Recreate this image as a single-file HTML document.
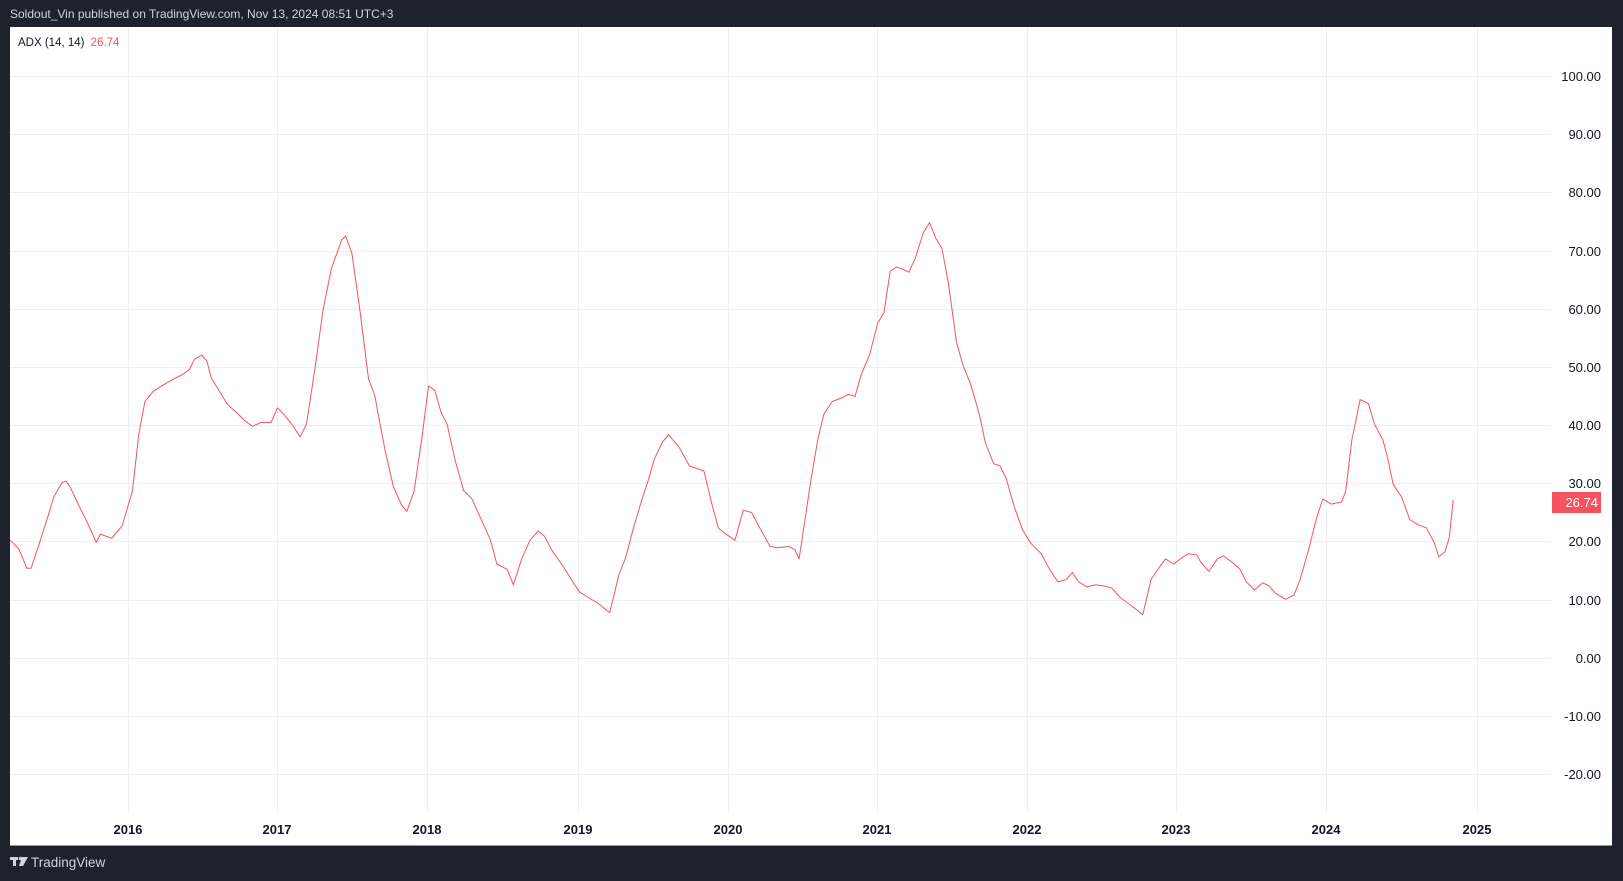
<!DOCTYPE html>
<html><head><style>
body{margin:0;width:1623px;height:881px;background:#1e222d;position:relative;overflow:hidden;font-family:"Liberation Sans",sans-serif}
.top{position:absolute;left:10px;top:7px;color:#d1d4dc;font-size:12px}
.chart{position:absolute;left:10px;top:27px;width:1602px;height:818px;background:#fff;border-bottom:1px solid #9598a1}
</style></head><body>
<div class="top">Soldout_Vin published on TradingView.com, Nov 13, 2024 08:51 UTC+3</div>
<div class="chart"></div>
<svg width="1623" height="881" style="position:absolute;left:0;top:0" font-family="Liberation Sans, sans-serif">
<g stroke="#eeeff2" stroke-width="1">
<line x1="10" x2="1551" y1="76.5" y2="76.5"/><line x1="10" x2="1551" y1="134.5" y2="134.5"/><line x1="10" x2="1551" y1="192.5" y2="192.5"/><line x1="10" x2="1551" y1="251.5" y2="251.5"/><line x1="10" x2="1551" y1="309.5" y2="309.5"/><line x1="10" x2="1551" y1="367.5" y2="367.5"/><line x1="10" x2="1551" y1="425.5" y2="425.5"/><line x1="10" x2="1551" y1="483.5" y2="483.5"/><line x1="10" x2="1551" y1="541.5" y2="541.5"/><line x1="10" x2="1551" y1="600.5" y2="600.5"/><line x1="10" x2="1551" y1="658.5" y2="658.5"/><line x1="10" x2="1551" y1="716.5" y2="716.5"/><line x1="10" x2="1551" y1="774.5" y2="774.5"/>
<line x1="128.5" x2="128.5" y1="27" y2="814"/><line x1="277.5" x2="277.5" y1="27" y2="814"/><line x1="427.5" x2="427.5" y1="27" y2="814"/><line x1="578.5" x2="578.5" y1="27" y2="814"/><line x1="728.5" x2="728.5" y1="27" y2="814"/><line x1="877.5" x2="877.5" y1="27" y2="814"/><line x1="1027.5" x2="1027.5" y1="27" y2="814"/><line x1="1176.5" x2="1176.5" y1="27" y2="814"/><line x1="1326.5" x2="1326.5" y1="27" y2="814"/><line x1="1477.5" x2="1477.5" y1="27" y2="814"/>
</g>
<g font-size="13" fill="#131722" text-anchor="end">
<text x="1601" y="81">100.00</text><text x="1601" y="139">90.00</text><text x="1601" y="197">80.00</text><text x="1601" y="256">70.00</text><text x="1601" y="314">60.00</text><text x="1601" y="372">50.00</text><text x="1601" y="430">40.00</text><text x="1601" y="488">30.00</text><text x="1601" y="546">20.00</text><text x="1601" y="605">10.00</text><text x="1601" y="663">0.00</text><text x="1601" y="721">-10.00</text><text x="1601" y="779">-20.00</text>
</g>
<rect x="1552" y="492" width="49" height="21" fill="#f7525f"/>
<text x="1598" y="507" font-size="13" fill="#fff" text-anchor="end">26.74</text>
<g font-size="13" font-weight="bold" fill="#131722" text-anchor="middle">
<text x="128" y="834">2016</text><text x="277" y="834">2017</text><text x="427" y="834">2018</text><text x="578" y="834">2019</text><text x="728" y="834">2020</text><text x="877" y="834">2021</text><text x="1027" y="834">2022</text><text x="1176" y="834">2023</text><text x="1326" y="834">2024</text><text x="1477" y="834">2025</text>
</g>
<text x="18" y="46" font-size="11.5" fill="#131722">ADX (14, 14) <tspan fill="#f7525f" dx="3">26.74</tspan></text>
<g transform="scale(1.0351)">
<polyline fill="none" stroke="#f7525f" stroke-width="1" vector-effect="non-scaling-stroke" stroke-linejoin="round" points="10,522 18,530 26,549 30,549 38,525 46,500 52,480 60,466 64,465 68,471 76,488 84,504 93,524 97,516 108,520 118,508 128,474 134,420 140,388 148,378 156,373 166,367 176,362 183,357 188,347 195,343 200,349 204,365 212,378 220,391 228,398 236,406 244,412 252,408 262,408 268,394 274,400 282,410 290,422 296,410 304,358 312,300 320,260 330,232 334,228 340,245 348,302 356,366 362,382 372,435 380,470 388,488 393,494 400,475 408,420 414,373 420,377 426,398 432,410 440,446 448,474 456,482 464,500 474,522 480,545 490,550 496,565 504,540 512,522 520,513 526,518 534,533 544,547 552,560 560,572 568,577 578,583 589,592 598,555 604,540 612,510 620,483 626,465 632,444 640,427 646,420 650,425 656,432 666,450 680,455 688,488 694,510 700,515 710,522 718,493 726,495 734,510 744,528 752,529 762,528 768,531 772,540 778,500 784,460 790,425 796,400 804,388 814,384 820,381 826,383 832,362 840,343 848,312 854,302 860,262 866,258 872,260 878,263 884,250 892,225 898,215 904,230 910,240 916,272 924,330 930,352 938,372 946,400 952,428 960,448 966,450 972,462 980,490 988,512 996,525 1006,535 1014,550 1022,562 1030,560 1036,553 1042,562 1050,567 1058,565 1066,566 1074,568 1082,577 1090,583 1098,589 1104,594 1112,560 1120,548 1126,540 1134,545 1140,540 1148,535 1156,536 1160,543 1168,552 1176,540 1182,537 1190,543 1198,550 1204,562 1212,570 1220,563 1226,566 1232,573 1242,579 1250,575 1256,560 1264,532 1272,500 1278,482 1286,487 1296,485 1300,475 1306,425 1314,386 1322,390 1328,410 1336,425 1340,440 1346,468 1354,480 1362,502 1370,507 1378,510 1386,525 1390,538 1396,533 1400,520 1404,483"/>
</g>
<g fill="#d1d4dc">
<rect x="10" y="857" width="8" height="3"/><rect x="13" y="857" width="3" height="9"/>
<circle cx="20.5" cy="858.5" r="1.8"/><polygon points="22,857 28,857 23,866 19,866"/>
</g>
<text x="31" y="867" font-size="13.5" fill="#d1d4dc">TradingView</text>
</svg>
</body></html>
